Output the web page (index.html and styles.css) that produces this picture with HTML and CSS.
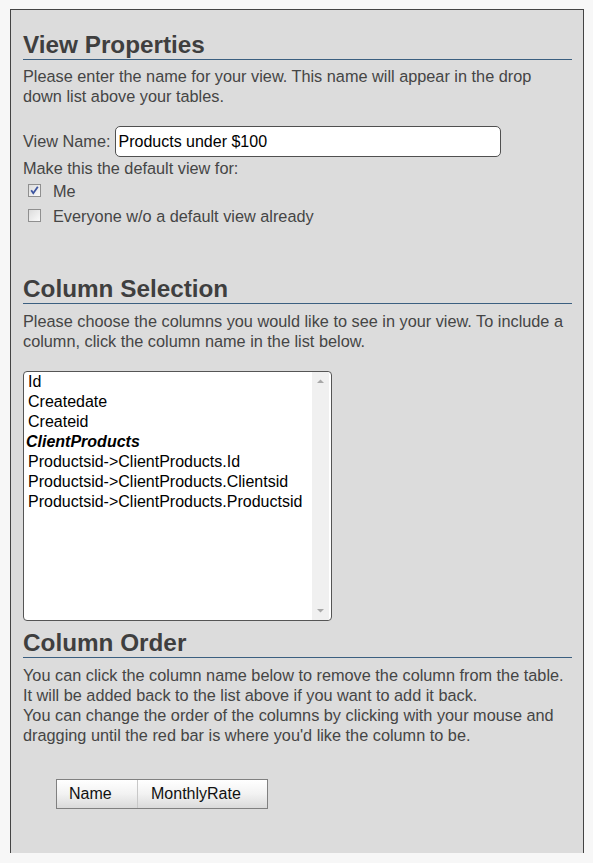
FILE: index.html
```html
<!DOCTYPE html>
<html>
<head>
<meta charset="utf-8">
<link rel="stylesheet" href="styles.css">
</head>
<body>
<div class="panel">
  <h2 class="heading first">View Properties</h2>
  <p class="text intro">Please enter the name for your view. This name will appear in the drop down list above your tables.</p>
  <div class="name-row">
    <span class="label">View Name:</span>
    <div class="input">Products under $100</div>
  </div>
  <div class="text line">Make this the default view for:</div>
  <div class="check-row">
    <span class="checkbox checked"><svg viewBox="0 0 13 13" width="13" height="13"><path d="M3.2 6.2 L5.3 9.2 L9.8 2.8" fill="none" stroke="#3d55a0" stroke-width="1.8"/></svg></span>
    <span class="text">Me</span>
  </div>
  <div class="check-row">
    <span class="checkbox"></span>
    <span class="text">Everyone w/o a default view already</span>
  </div>

  <h2 class="heading second">Column Selection</h2>
  <p class="text">Please choose the columns you would like to see in your view. To include a column, click the column name in the list below.</p>
  <div class="listbox">
    <div class="options">
      <div class="opt">Id</div>
      <div class="opt">Createdate</div>
      <div class="opt">Createid</div>
      <div class="opt group">ClientProducts</div>
      <div class="opt">Productsid-&gt;ClientProducts.Id</div>
      <div class="opt">Productsid-&gt;ClientProducts.Clientsid</div>
      <div class="opt">Productsid-&gt;ClientProducts.Productsid</div>
    </div>
    <div class="scrollbar">
      <svg class="arrow" viewBox="0 0 17 17" width="17" height="17"><path d="M5 10 L8.5 6.5 L12 10 Z" fill="#a8a8a8"/></svg>
      <svg class="arrow" viewBox="0 0 17 17" width="17" height="17"><path d="M5 7 L8.5 10.5 L12 7 Z" fill="#a8a8a8"/></svg>
    </div>
  </div>

  <h2 class="heading third">Column Order</h2>
  <p class="text">You can click the column name below to remove the column from the table.<br>It will be added back to the list above if you want to add it back.<br>You can change the order of the columns by clicking with your mouse and dragging until the red bar is where you'd like the column to be.</p>
  <div class="order">
    <div class="col c1">Name</div>
    <div class="col c2">MonthlyRate</div>
  </div>
</div>
</body>
</html>
```
FILE: styles.css
```css
html, body {
  margin: 0;
  padding: 0;
  background: #f7f7f7;
  height: 863px;
  overflow: hidden;
}
body {
  font-family: "Liberation Sans", Arial, sans-serif;
  color: #454545;
}
.panel {
  margin: 9px 0 0 10px;
  width: 574px;
  height: 844px;
  box-sizing: border-box;
  border: 1px solid #444;
  border-bottom: none;
  background: #dcdcdc;
  padding: 0 11px 0 12px;
}
.heading {
  margin: 0;
  font-size: 24.3px;
  line-height: 27px;
  font-weight: bold;
  color: #3f3f3f;
  border-bottom: 1px solid #3b5f80;
  padding-bottom: 1px;
}
.heading.first { margin-top: 21px; }
.heading.second { margin-top: 47px; }
.heading.third { margin-top: 8px; }
.text {
  font-size: 16.3px;
  line-height: 20px;
}
p.text {
  margin: 7px 0 0 0;
}
p.text.intro {
  margin-top: 6px;
}
.name-row {
  margin-top: 20px;
  display: flex;
  align-items: center;
  gap: 5px;
}
.label {
  font-size: 16.3px;
}
.input {
  width: 386px;
  height: 31px;
  box-sizing: border-box;
  border: 1px solid #505050;
  border-radius: 5px;
  background: #fff;
  color: #000;
  font-size: 16px;
  line-height: 29px;
  padding-left: 2px;
}
.line {
  margin-top: 1px;
}
.check-row {
  display: flex;
  align-items: center;
  height: 25px;
  padding-left: 5px;
  gap: 12px;
}
.check-row:first-of-type { margin-top: 1px; }
.checkbox {
  width: 13px;
  height: 13px;
  box-sizing: border-box;
  border: 1px solid #8f8f8f;
  background: linear-gradient(135deg, #dcdcdc, #fafafa);
  display: flex;
}
.checkbox svg { margin: -1px; }
.listbox {
  margin-top: 20px;
  width: 309px;
  height: 250px;
  box-sizing: border-box;
  border: 1px solid #555;
  border-radius: 4px;
  background: #fff;
  display: flex;
  justify-content: space-between;
  overflow: hidden;
}
.options {
  padding-left: 4px;
  color: #000;
  font-size: 16px;
  line-height: 20px;
}
.opt.group {
  font-weight: bold;
  font-style: italic;
  margin-left: -2px;
}
.scrollbar {
  width: 17px;
  margin-right: 2px;
  background: #f0f0f0;
  display: flex;
  flex-direction: column;
  justify-content: space-between;
  padding: 1px 0;
}
.order {
  margin: 34px 0 0 33px;
  display: flex;
  width: 212px;
  height: 30px;
  box-sizing: border-box;
  border: 1px solid #808080;
  background: linear-gradient(#ffffff, #f2f2f2 50%, #dadada);
  color: #111;
  font-size: 16px;
  line-height: 28px;
}
.col.c1 {
  width: 81px;
  padding-left: 12px;
  box-sizing: border-box;
  border-right: 1px solid #c8c8c8;
}
.col.c2 {
  padding-left: 13px;
}
```
